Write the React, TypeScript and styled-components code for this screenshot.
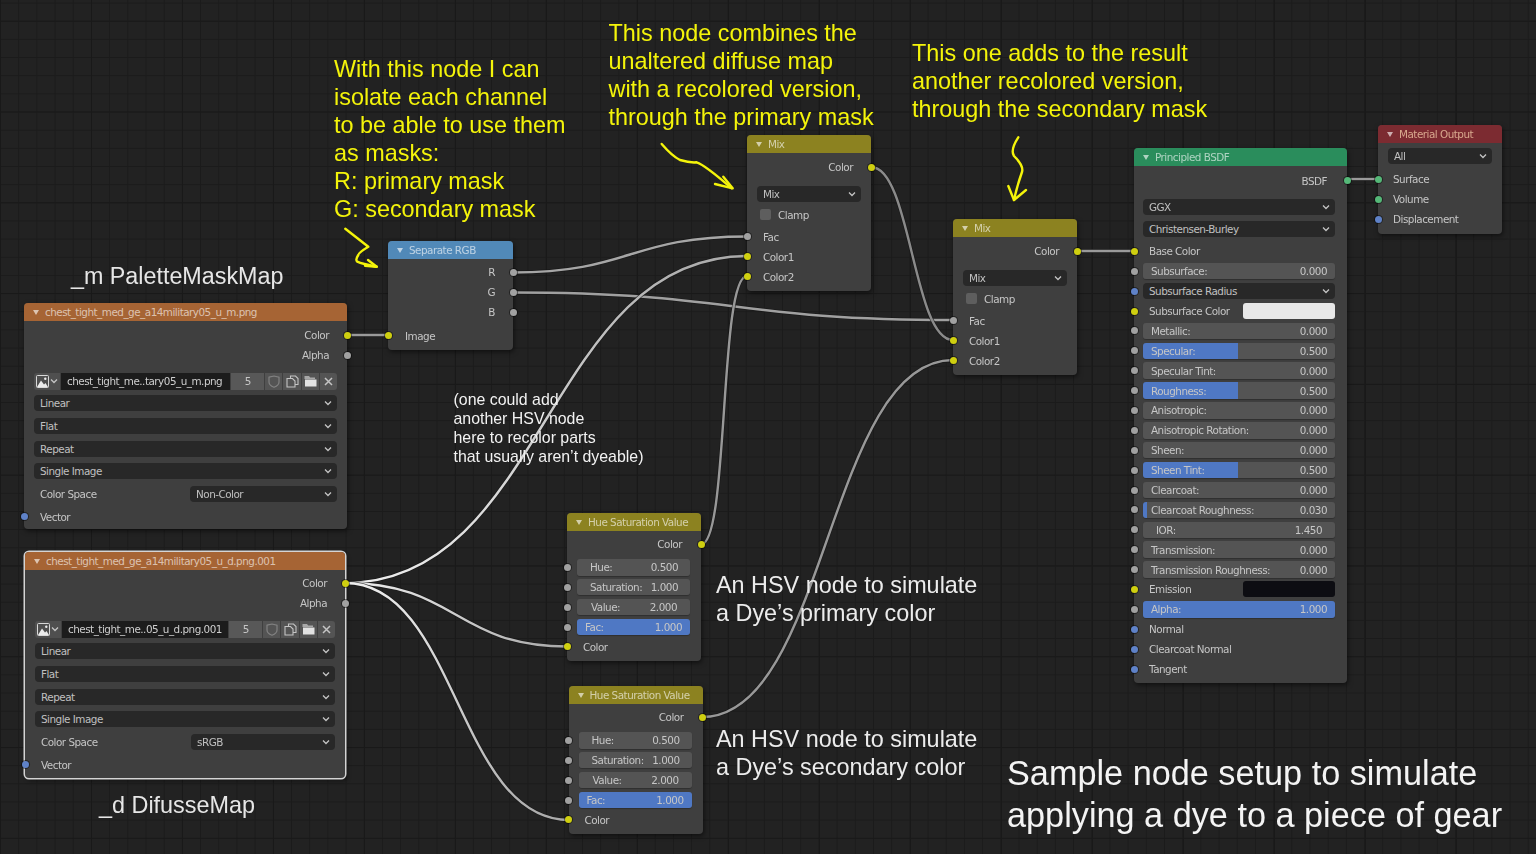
import { FC, ReactNode } from "react";
import styled, { createGlobalStyle } from "styled-components";

const GlobalStyle = createGlobalStyle`
    html, body {
        margin: 0;
        padding: 0;
        background: #222222;
    }
`;

const Canvas = styled.div`
    position: relative;
    width: 1536px;
    height: 854px;
    overflow: hidden;
    font-family: "DejaVu Sans", sans-serif;
    background-color: #222222;
    background-image:
        linear-gradient(#191919 1px, transparent 1px),
        linear-gradient(90deg, #191919 1px, transparent 1px),
        linear-gradient(#1b1b1b 1px, transparent 1px),
        linear-gradient(90deg, #1b1b1b 1px, transparent 1px);
    background-size: 90.8px 90.8px, 91px 91px, 18.16px 18.16px, 18.2px 18.2px;
    background-position: 0 20.7px, 0 7.3px, 0 2.6px, 0 7.3px;
`;

const Layer = styled.svg`
    position: absolute;
    left: 0;
    top: 0;
    width: 1536px;
    height: 854px;
    pointer-events: none;
`;

const Node = styled.div<{ $x: number; $y: number; $w: number; $selected?: boolean }>`
    position: absolute;
    left: ${(p) => p.$x}px;
    top: ${(p) => p.$y}px;
    width: ${(p) => p.$w}px;
    box-sizing: border-box;
    background: #3f3f3f;
    border-radius: 4px;
    font-size: 10.4px;
    letter-spacing: -0.5px;
    color: #c6c6c6;
    filter: blur(0.3px);
    box-shadow: ${(p) =>
        p.$selected
            ? "0 0 0 1.5px #d4d4d4, 2px 3px 4px rgba(0, 0, 0, 0.4)"
            : "1px 2px 5px rgba(0, 0, 0, 0.55)"};
`;

const Header = styled.div<{ $bg: string; $fg?: string }>`
    display: flex;
    align-items: center;
    gap: 6px;
    height: 18px;
    padding-left: 9px;
    background: ${(p) => p.$bg};
    color: ${(p) => p.$fg ?? "rgba(255, 255, 255, 0.62)"};
    border-radius: 4px 4px 0 0;
    white-space: nowrap;
`;

const Caret = styled.span`
    width: 0;
    height: 0;
    border-left: 3px solid transparent;
    border-right: 3px solid transparent;
    border-top: 5px solid rgba(255, 255, 255, 0.62);
`;

const Body = styled.div<{ $top?: number; $bottom?: number; $left?: number; $right?: number }>`
    display: flex;
    flex-direction: column;
    padding: ${(p) => p.$top ?? 3}px ${(p) => p.$right ?? 10}px ${(p) => p.$bottom ?? 4}px
        ${(p) => p.$left ?? 10}px;
`;

const Row = styled.div<{ $out?: boolean; $mt?: number }>`
    position: relative;
    display: flex;
    align-items: center;
    height: 19.9px;
    flex: none;
    justify-content: ${(p) => (p.$out ? "flex-end" : "flex-start")};
    margin-top: ${(p) => p.$mt ?? 0}px;
    white-space: nowrap;
`;

const RowLabel = styled.span<{ $out?: boolean; $pl?: number }>`
    padding: ${(p) => (p.$out ? "0 8px 0 0" : `0 0 0 ${p.$pl ?? 7}px`)};
`;

const SOCKET = {
    yellow: "#cfcf10",
    gray: "#a1a1a1",
    blue: "#5f82c8",
    green: "#55b878",
};

const Socket = styled.i<{ $kind: keyof typeof SOCKET; $right?: boolean; $off?: number }>`
    position: absolute;
    top: 50%;
    ${(p) => (p.$right ? "right" : "left")}: ${(p) => -(p.$off ?? 10) - 3.5}px;
    width: 7px;
    height: 7px;
    margin-top: -3.5px;
    border-radius: 50%;
    background: ${(p) => SOCKET[p.$kind]};
    box-shadow: 0 0 0 1px rgba(0, 0, 0, 0.45);
`;

const Select = styled.div<{ $mt?: number }>`
    display: flex;
    flex: 1;
    align-items: center;
    justify-content: space-between;
    box-sizing: border-box;
    height: 16px;
    margin-top: ${(p) => p.$mt ?? 0}px;
    padding: 0 5px 0 6px;
    background: #282828;
    border-radius: 4px;
    color: #c0c0c0;
    white-space: nowrap;
`;

const SelectBlock = styled(Select)`
    flex: none;
`;

const Field = styled.div<{ $fill?: number; $pad?: number; $padR?: number }>`
    position: relative;
    display: flex;
    flex: 1;
    align-items: center;
    justify-content: space-between;
    box-sizing: border-box;
    height: 16.5px;
    padding: 0 ${(p) => p.$padR ?? p.$pad ?? 8}px 0 ${(p) => p.$pad ?? 8}px;
    border-radius: 3px;
    overflow: hidden;
    color: #c6c6c6;
    background: linear-gradient(
        90deg,
        #4f78c4 ${(p) => p.$fill ?? 0}%,
        #545454 ${(p) => p.$fill ?? 0}%
    );
    box-shadow: 0 1px 1px rgba(0, 0, 0, 0.25);
    white-space: nowrap;
`;

const Swatch = styled.div<{ $color: string }>`
    width: 92px;
    height: 16px;
    margin-left: auto;
    border-radius: 3px;
    background: ${(p) => p.$color};
`;

const Check = styled.span`
    width: 11px;
    height: 11px;
    margin-left: 3px;
    border-radius: 2px;
    background: #5e5e5e;
`;

const CheckLabel = styled.span`
    padding-left: 7px;
`;

const Stack = styled.div`
    display: flex;
    flex-direction: column;
    gap: 6.6px;
    margin-top: 7.5px;
`;

const SpaceRow = styled.div`
    display: flex;
    align-items: center;
`;

const SpaceLabel = styled.span`
    width: 156px;
    padding-left: 6px;
    box-sizing: border-box;
    flex: none;
`;

const ImageBar = styled.div`
    display: flex;
    align-items: stretch;
    height: 17px;
    gap: 1px;
    margin-bottom: -1px;
`;

const Browse = styled.div`
    display: flex;
    align-items: center;
    justify-content: center;
    gap: 1px;
    width: 26px;
    flex: none;
    border-radius: 3px 0 0 3px;
    background: #4f4f4f;
`;

const ImageName = styled.div`
    display: flex;
    align-items: center;
    flex: 1;
    padding-left: 6px;
    background: #1c1c1c;
    color: #cfcfcf;
    white-space: nowrap;
`;

const Users = styled.div`
    display: flex;
    align-items: center;
    justify-content: center;
    width: 33px;
    flex: none;
    background: #585858;
`;

const IconBtn = styled.div<{ $last?: boolean }>`
    display: flex;
    align-items: center;
    justify-content: center;
    width: 17.2px;
    flex: none;
    background: #545454;
    border-radius: ${(p) => (p.$last ? "0 3px 3px 0" : "0")};
`;

const Note = styled.div<{
    $x: number;
    $y: number;
    $size: number;
    $lh: number;
    $color: string;
}>`
    position: absolute;
    left: ${(p) => p.$x}px;
    top: ${(p) => p.$y}px;
    font-family: "Liberation Sans", Arial, sans-serif;
    font-size: ${(p) => p.$size}px;
    line-height: ${(p) => p.$lh}px;
    color: ${(p) => p.$color};
    white-space: pre;
`;

const Chevron: FC = () => (
    <svg width="8" height="6" viewBox="0 0 8 6" fill="none">
        <path d="M1 1.5 L4 4.5 L7 1.5" stroke="#c4c4c4" strokeWidth="1.3" />
    </svg>
);

const ImageIcon: FC = () => (
    <svg width="13" height="13" viewBox="0 0 13 13" fill="none">
        <rect x="0.5" y="0.5" width="12" height="12" rx="1" stroke="#d8d8d8" />
        <path d="M1 12 L5 5.5 L8 9.5 L9.5 8 L12 12 Z" fill="#ececec" />
        <circle cx="9.3" cy="3.8" r="1.2" fill="#ececec" />
    </svg>
);

const ShieldIcon: FC = () => (
    <svg width="12" height="13" viewBox="0 0 12 13" fill="none">
        <path
            d="M1 2.2 L6 1 L11 2.2 V7 C11 9.5 8.5 11.3 6 12.2 C3.5 11.3 1 9.5 1 7 Z"
            stroke="#828282"
            strokeWidth="1.2"
        />
    </svg>
);

const CopyIcon: FC = () => (
    <svg width="13" height="13" viewBox="0 0 13 13" fill="none" stroke="#c4c4c4" strokeWidth="1.1">
        <path d="M4.5 3 V1 H9.5 L12 3.5 V9.5 H9" />
        <path d="M1 3.5 H6.5 L9 6 V12 H1 Z" />
    </svg>
);

const FolderIcon: FC = () => (
    <svg width="13" height="12" viewBox="0 0 13 12">
        <path d="M0.5 1 H5 L6.2 2.5 H11 V4 H0.5 Z" fill="#a8a8a8" />
        <path d="M1 4.5 H12.5 V11.5 H1 Z" fill="#e2e2e2" />
    </svg>
);

const CloseIcon: FC = () => (
    <svg width="9" height="9" viewBox="0 0 9 9">
        <path d="M1 1 L8 8 M8 1 L1 8" stroke="#c4c4c4" strokeWidth="1.5" />
    </svg>
);

const NodeHead: FC<{ bg: string; fg?: string; children: ReactNode }> = ({ bg, fg, children }) => (
    <Header $bg={bg} $fg={fg}>
        <Caret />
        {children}
    </Header>
);

const Dropdown: FC<{ label: string }> = ({ label }) => (
    <SelectBlock>
        {label}
        <Chevron />
    </SelectBlock>
);

type TexProps = {
    x: number;
    y: number;
    w: number;
    top: number;
    title: string;
    file: string;
    space: string;
    selected?: boolean;
};

const TextureNode: FC<TexProps> = ({ x, y, w, top, title, file, space, selected }) => (
    <Node $x={x} $y={y} $w={w} $selected={selected}>
        <NodeHead bg="#a66434">{title}</NodeHead>
        <Body $top={top} $bottom={7 - top}>
            <Row $out>
                <RowLabel $out>Color</RowLabel>
                <Socket $kind="yellow" $right />
            </Row>
            <Row $out>
                <RowLabel $out>Alpha</RowLabel>
                <Socket $kind="gray" $right />
            </Row>
            <Stack>
                <ImageBar>
                    <Browse>
                        <ImageIcon />
                        <Chevron />
                    </Browse>
                    <ImageName>{file}</ImageName>
                    <Users>5</Users>
                    <IconBtn>
                        <ShieldIcon />
                    </IconBtn>
                    <IconBtn>
                        <CopyIcon />
                    </IconBtn>
                    <IconBtn>
                        <FolderIcon />
                    </IconBtn>
                    <IconBtn $last>
                        <CloseIcon />
                    </IconBtn>
                </ImageBar>
                <Dropdown label="Linear" />
                <Dropdown label="Flat" />
                <Dropdown label="Repeat" />
                <Dropdown label="Single Image" />
                <SpaceRow>
                    <SpaceLabel>Color Space</SpaceLabel>
                    <Select>
                        {space}
                        <Chevron />
                    </Select>
                </SpaceRow>
            </Stack>
            <Row $mt={5}>
                <RowLabel $pl={6}>Vector</RowLabel>
                <Socket $kind="blue" />
            </Row>
        </Body>
    </Node>
);

const HsvNode: FC<{ x: number; y: number }> = ({ x, y }) => (
    <Node $x={x} $y={y} $w={134}>
        <NodeHead bg="#8c8220">Hue Saturation Value</NodeHead>
        <Body $top={3.5} $bottom={4} $right={11}>
            <Row $out>
                <RowLabel $out>Color</RowLabel>
                <Socket $kind="yellow" $right $off={11} />
            </Row>
            <Row $mt={3}>
                <Socket $kind="gray" />
                <Field $pad={13} $padR={12}>
                    <span>Hue:</span>
                    <span>0.500</span>
                </Field>
            </Row>
            <Row>
                <Socket $kind="gray" />
                <Field $pad={13} $padR={12}>
                    <span>Saturation:</span>
                    <span>1.000</span>
                </Field>
            </Row>
            <Row>
                <Socket $kind="gray" />
                <Field $pad={14} $padR={13}>
                    <span>Value:</span>
                    <span>2.000</span>
                </Field>
            </Row>
            <Row>
                <Socket $kind="gray" />
                <Field $fill={100}>
                    <span>Fac:</span>
                    <span>1.000</span>
                </Field>
            </Row>
            <Row>
                <RowLabel $pl={6}>Color</RowLabel>
                <Socket $kind="yellow" />
            </Row>
        </Body>
    </Node>
);

const MixNode: FC<{ x: number; y: number }> = ({ x, y }) => (
    <Node $x={x} $y={y} $w={124}>
        <NodeHead bg="#8c8220">Mix</NodeHead>
        <Body $top={4.5} $bottom={4.5}>
            <Row $out>
                <RowLabel $out>Color</RowLabel>
                <Socket $kind="yellow" $right />
            </Row>
            <SelectBlock $mt={8.5}>
                Mix
                <Chevron />
            </SelectBlock>
            <Row $mt={3}>
                <Check />
                <CheckLabel>Clamp</CheckLabel>
            </Row>
            <Row $mt={2}>
                <RowLabel $pl={6}>Fac</RowLabel>
                <Socket $kind="gray" />
            </Row>
            <Row>
                <RowLabel $pl={6}>Color1</RowLabel>
                <Socket $kind="yellow" />
            </Row>
            <Row>
                <RowLabel $pl={6}>Color2</RowLabel>
                <Socket $kind="yellow" />
            </Row>
        </Body>
    </Node>
);

type BsdfRow =
    | { type: "label"; label: string; socket: keyof typeof SOCKET }
    | { type: "field"; label: string; value: string; fill?: number; pad?: number; padR?: number }
    | { type: "select"; label: string }
    | { type: "color"; label: string; color: string };

const BSDF_ROWS: BsdfRow[] = [
    { type: "field", label: "Subsurface:", value: "0.000" },
    { type: "select", label: "Subsurface Radius" },
    { type: "color", label: "Subsurface Color", color: "#e8e8e8" },
    { type: "field", label: "Metallic:", value: "0.000" },
    { type: "field", label: "Specular:", value: "0.500", fill: 49.5 },
    { type: "field", label: "Specular Tint:", value: "0.000" },
    { type: "field", label: "Roughness:", value: "0.500", fill: 49.5 },
    { type: "field", label: "Anisotropic:", value: "0.000" },
    { type: "field", label: "Anisotropic Rotation:", value: "0.000" },
    { type: "field", label: "Sheen:", value: "0.000" },
    { type: "field", label: "Sheen Tint:", value: "0.500", fill: 49.5 },
    { type: "field", label: "Clearcoat:", value: "0.000" },
    { type: "field", label: "Clearcoat Roughness:", value: "0.030", fill: 2 },
    { type: "field", label: "IOR:", value: "1.450", pad: 13, padR: 13 },
    { type: "field", label: "Transmission:", value: "0.000" },
    { type: "field", label: "Transmission Roughness:", value: "0.000" },
    { type: "color", label: "Emission", color: "#0d0d12" },
    { type: "field", label: "Alpha:", value: "1.000", fill: 100 },
    { type: "label", label: "Normal", socket: "blue" },
    { type: "label", label: "Clearcoat Normal", socket: "blue" },
    { type: "label", label: "Tangent", socket: "blue" },
];

const BsdfLine: FC<{ row: BsdfRow }> = ({ row }) => {
    if (row.type === "field") {
        return (
            <Row>
                <Socket $kind="gray" $off={9} />
                <Field $fill={row.fill} $pad={row.pad} $padR={row.padR}>
                    <span>{row.label}</span>
                    <span>{row.value}</span>
                </Field>
            </Row>
        );
    }
    if (row.type === "select") {
        return (
            <Row>
                <Socket $kind="blue" $off={9} />
                <Select>
                    {row.label}
                    <Chevron />
                </Select>
            </Row>
        );
    }
    if (row.type === "color") {
        return (
            <Row>
                <Socket $kind="yellow" $off={9} />
                <RowLabel $pl={6}>{row.label}</RowLabel>
                <Swatch $color={row.color} />
            </Row>
        );
    }
    return (
        <Row>
            <Socket $kind={row.socket} $off={9} />
            <RowLabel $pl={6}>{row.label}</RowLabel>
        </Row>
    );
};

type Wire = { d: string; from: string; to: string; x1: number; x2: number; y1: number; y2: number };

const curve = (x1: number, y1: number, x2: number, y2: number, dx: number, from: string, to: string): Wire => ({
    d: `M${x1} ${y1} C${x1 + dx} ${y1} ${x2 - dx} ${y2} ${x2} ${y2}`,
    from,
    to,
    x1,
    y1,
    x2,
    y2: y2 === y1 ? y1 + 0.01 : y2,
});

const WIRES: Wire[] = [
    curve(347, 335, 388, 335, 10, "#9a9a9a", "#9a9a9a"),
    curve(513, 272.5, 747, 236.5, 117, "#a6a6a6", "#a6a6a6"),
    curve(513, 292.5, 953, 320, 220, "#a0a0a0", "#a0a0a0"),
    curve(345, 583, 747, 256, 200, "#f0f0f0", "#a8a8a8"),
    curve(345, 583, 567, 646.5, 111, "#f0f0f0", "#a8a8a8"),
    curve(345, 583, 569, 820, 112, "#f0f0f0", "#a8a8a8"),
    curve(701, 544.5, 747, 276, 28, "#989898", "#989898"),
    curve(702, 717, 953, 360, 125, "#989898", "#989898"),
    curve(871, 167, 953, 340, 40, "#8a8a8a", "#8a8a8a"),
    curve(1077, 251, 1134, 251, 20, "#9a9a9a", "#9a9a9a"),
    curve(1347, 179, 1378, 179, 10, "#9a9a9a", "#9a9a9a"),
];

const SCRIBBLES = [
    "M345.3 228.7 L368.3 246.7 Q358 253 358.3 255 Q355 260 357.3 261.7 Q362 264 376.7 266.7",
    "M368 260 L376.7 266.7 L365 265.7",
    "M661.7 144 Q672 156 680 160 Q690 163 696.7 162.3 Q705 165 731.7 188.3",
    "M723.3 176.7 L732.7 188.3 L715 184",
    "M1018.3 137.3 Q1010 150 1014 156 Q1024 166 1022 172 Q1017 186 1014 200",
    "M1008.3 186 L1014 200 L1026 190",
];

const YELLOW = "#f4f40a";

const App: FC = () => (
    <Canvas>
        <GlobalStyle />
        <Layer viewBox="0 0 1536 854">
            <defs>
                {WIRES.map((w, i) => (
                    <linearGradient
                        key={i}
                        id={`wire${i}`}
                        gradientUnits="userSpaceOnUse"
                        x1={w.x1}
                        y1={w.y1}
                        x2={w.x2}
                        y2={w.y2}
                    >
                        <stop offset="0" stopColor={w.from} />
                        <stop offset="1" stopColor={w.to} />
                    </linearGradient>
                ))}
            </defs>
            {WIRES.map((w, i) => (
                <g key={i} fill="none">
                    <path d={w.d} stroke="#171717" strokeWidth="3.8" opacity="0.7" />
                    <path d={w.d} stroke={`url(#wire${i})`} strokeWidth="2.4" />
                </g>
            ))}
        </Layer>

        <TextureNode
            x={24}
            y={303}
            w={323}
            top={4.5}
            title="chest_tight_med_ge_a14military05_u_m.png"
            file="chest_tight_me..tary05_u_m.png"
            space="Non-Color"
        />
        <TextureNode
            x={25}
            y={552}
            w={320}
            top={3.5}
            selected
            title="chest_tight_med_ge_a14military05_u_d.png.001"
            file="chest_tight_me..05_u_d.png.001"
            space="sRGB"
        />

        <Node $x={388} $y={241} $w={125}>
            <NodeHead bg="#5189b8">Separate RGB</NodeHead>
            <Body $top={3.5} $bottom={4}>
                <Row $out>
                    <RowLabel $out>R</RowLabel>
                    <Socket $kind="gray" $right />
                </Row>
                <Row $out>
                    <RowLabel $out>G</RowLabel>
                    <Socket $kind="gray" $right />
                </Row>
                <Row $out>
                    <RowLabel $out>B</RowLabel>
                    <Socket $kind="gray" $right />
                </Row>
                <Row $mt={3.5}>
                    <RowLabel>Image</RowLabel>
                    <Socket $kind="yellow" />
                </Row>
            </Body>
        </Node>

        <MixNode x={747} y={135} />
        <MixNode x={953} y={219} />
        <HsvNode x={567} y={513} />
        <HsvNode x={568.5} y={686} />

        <Node $x={1134} $y={148} $w={213}>
            <NodeHead bg="#2a8d5c">Principled BSDF</NodeHead>
            <Body $top={5} $bottom={4} $left={9} $right={12}>
                <Row $out>
                    <RowLabel $out>BSDF</RowLabel>
                    <Socket $kind="green" $right $off={12} />
                </Row>
                <SelectBlock $mt={8}>
                    GGX
                    <Chevron />
                </SelectBlock>
                <SelectBlock $mt={6.5}>
                    Christensen-Burley
                    <Chevron />
                </SelectBlock>
                <Row $mt={4}>
                    <Socket $kind="yellow" $off={9} />
                    <RowLabel $pl={6}>Base Color</RowLabel>
                </Row>
                {BSDF_ROWS.map((row) => (
                    <BsdfLine key={row.label} row={row} />
                ))}
            </Body>
        </Node>

        <Node $x={1378} $y={125} $w={124}>
            <NodeHead bg="#7c2b31" fg="#d9a98e">
                Material Output
            </NodeHead>
            <Body $top={5} $bottom={4.5}>
                <SelectBlock>
                    All
                    <Chevron />
                </SelectBlock>
                <Row $mt={5.5}>
                    <RowLabel $pl={5}>Surface</RowLabel>
                    <Socket $kind="green" />
                </Row>
                <Row>
                    <RowLabel $pl={5}>Volume</RowLabel>
                    <Socket $kind="green" />
                </Row>
                <Row>
                    <RowLabel $pl={5}>Displacement</RowLabel>
                    <Socket $kind="blue" />
                </Row>
            </Body>
        </Node>

        <Layer viewBox="0 0 1536 854">
            {SCRIBBLES.map((d) => (
                <path key={d} d={d} fill="none" stroke={YELLOW} strokeWidth="2.4" strokeLinecap="round" strokeLinejoin="round" />
            ))}
        </Layer>

        <Note $x={334} $y={55} $size={23.4} $lh={28} $color={YELLOW}>
            {"With this node I can\nisolate each channel\nto be able to use them\nas masks:\nR: primary mask\nG: secondary mask"}
        </Note>
        <Note $x={608.5} $y={19} $size={23.4} $lh={28} $color={YELLOW}>
            {"This node combines the\nunaltered diffuse map\nwith a recolored version,\nthrough the primary mask"}
        </Note>
        <Note $x={912} $y={39} $size={23.4} $lh={28.2} $color={YELLOW}>
            {"This one adds to the result\nanother recolored version,\nthrough the secondary mask"}
        </Note>
        <Note $x={71} $y={262} $size={23.3} $lh={28} $color="#e6e6e6">
            _m PaletteMaskMap
        </Note>
        <Note $x={99} $y={791} $size={23.4} $lh={28} $color="#e6e6e6">
            _d DifusseMap
        </Note>
        <Note $x={453.5} $y={390} $size={15.9} $lh={19} $color="#f2f2f2">
            {"(one could add\nanother HSV node\nhere to recolor parts\nthat usually aren\u2019t dyeable)"}
        </Note>
        <Note $x={716} $y={571} $size={23.4} $lh={28} $color="#ececec">
            {"An HSV node to simulate\na Dye\u2019s primary color"}
        </Note>
        <Note $x={716} $y={725} $size={23.4} $lh={28} $color="#ececec">
            {"An HSV node to simulate\na Dye\u2019s secondary color"}
        </Note>
        <Note $x={1007} $y={752} $size={34.25} $lh={42} $color="#f4f4f4">
            {"Sample node setup to simulate\napplying a dye to a piece of gear"}
        </Note>
    </Canvas>
);

export default App;
